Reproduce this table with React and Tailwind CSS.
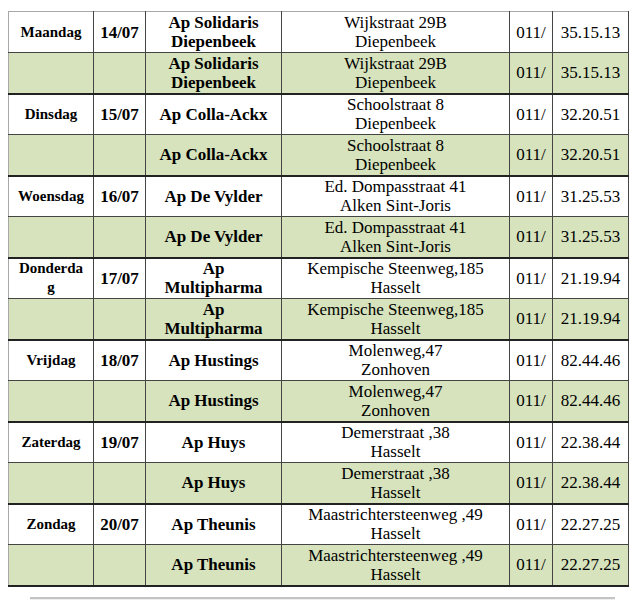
import React from 'react';

const rows = [
  { day: 'Maandag', date: '14/07', name: 'Ap Solidaris Diepenbeek', street: 'Wijkstraat 29B', city: 'Diepenbeek', tel: '35.15.13' },
  { day: 'Dinsdag', date: '15/07', name: 'Ap Colla-Ackx', street: 'Schoolstraat 8', city: 'Diepenbeek', tel: '32.20.51' },
  { day: 'Woensdag', date: '16/07', name: 'Ap De Vylder', street: 'Ed. Dompasstraat 41', city: 'Alken Sint-Joris', tel: '31.25.53' },
  { day: 'Donderdag', date: '17/07', name: 'Ap Multipharma', street: 'Kempische Steenweg,185', city: 'Hasselt', tel: '21.19.94' },
  { day: 'Vrijdag', date: '18/07', name: 'Ap Hustings', street: 'Molenweg,47', city: 'Zonhoven', tel: '82.44.46' },
  { day: 'Zaterdag', date: '19/07', name: 'Ap Huys', street: 'Demerstraat ,38', city: 'Hasselt', tel: '22.38.44' },
  { day: 'Zondag', date: '20/07', name: 'Ap Theunis', street: 'Maastrichtersteenweg ,49', city: 'Hasselt', tel: '22.27.25' },
];

const Row = ({ item, backup, first }) => {
  const bg = backup ? 'bg-[#d6e3bc]' : 'bg-white';
  const top = first ? 'border-t border-t-[#a8a8a8]' : '';
  const bottom = backup ? 'border-b-2 border-b-[#222]' : 'border-b border-b-[#444]';
  const cell = `${bg} ${top} ${bottom} border-r border-r-[#444] p-0 text-center align-middle`;
  return (
    <tr className="h-[41px]">
      <td className={`${cell} border-l border-l-[#a8a8a8] px-2 text-[15px] font-bold leading-[19px] break-all`}>
        {backup ? '' : item.day}
      </td>
      <td className={`${cell} text-[17px] font-bold leading-[19px]`}>{backup ? '' : item.date}</td>
      <td className={`${cell} px-2 text-[17px] font-bold leading-[19px]`}>{item.name}</td>
      <td className={`${cell} text-[17px] leading-[19px]`}>
        <div>{item.street}</div>
        <div>{item.city}</div>
      </td>
      <td className={`${cell} text-[17px] leading-[19px]`}>011/</td>
      <td className={`${cell} border-r-[#8a8a8a] text-[17px] leading-[19px]`}>{item.tel}</td>
    </tr>
  );
};

export default function App() {
  return (
    <div className="h-[600px] overflow-hidden bg-white pt-[11px] font-['Liberation_Serif',serif] text-black">
      <table className="ml-[8px] w-[620px] table-fixed border-collapse">
        <colgroup>
          <col className="w-[85px]" />
          <col className="w-[52px]" />
          <col className="w-[136px]" />
          <col className="w-[228px]" />
          <col className="w-[43px]" />
          <col className="w-[76px]" />
        </colgroup>
        <tbody>
          {rows.map((item, i) => (
            <React.Fragment key={item.date}>
              <Row item={item} backup={false} first={i === 0} />
              <Row item={item} backup={true} first={false} />
            </React.Fragment>
          ))}
        </tbody>
      </table>
      <div className="ml-[30px] mt-[10px] h-[4px] w-[585px] border-t-2 border-[#c4c4c4] bg-[#eeeeee]" />
    </div>
  );
}
